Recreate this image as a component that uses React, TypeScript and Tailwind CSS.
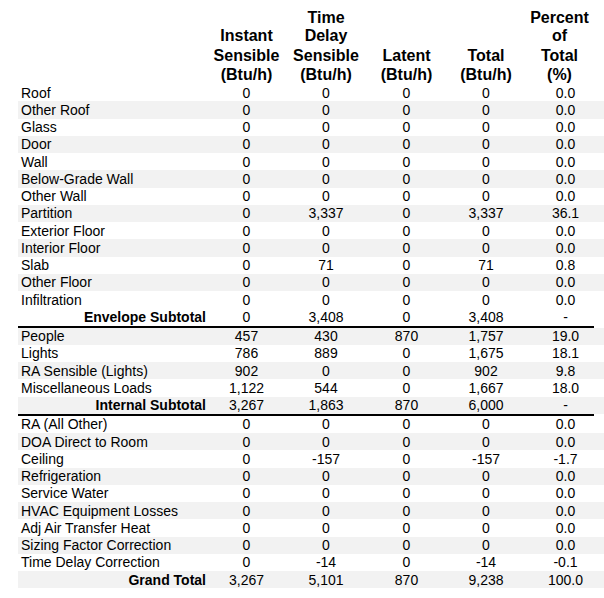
type Row = {
  label: string;
  values: string[];
  shaded?: boolean;
  subtotal?: boolean;
  ruleAfter?: boolean;
};

const zeros = ['0', '0', '0', '0', '0.0'];

const rows: Row[] = [
  { label: 'Roof', values: zeros },
  { label: 'Other Roof', values: zeros, shaded: true },
  { label: 'Glass', values: zeros },
  { label: 'Door', values: zeros, shaded: true },
  { label: 'Wall', values: zeros },
  { label: 'Below-Grade Wall', values: zeros, shaded: true },
  { label: 'Other Wall', values: zeros },
  { label: 'Partition', values: ['0', '3,337', '0', '3,337', '36.1'], shaded: true },
  { label: 'Exterior Floor', values: zeros },
  { label: 'Interior Floor', values: zeros, shaded: true },
  { label: 'Slab', values: ['0', '71', '0', '71', '0.8'] },
  { label: 'Other Floor', values: zeros, shaded: true },
  { label: 'Infiltration', values: zeros },
  { label: 'Envelope Subtotal', values: ['0', '3,408', '0', '3,408', '-'], subtotal: true, ruleAfter: true },
  { label: 'People', values: ['457', '430', '870', '1,757', '19.0'], shaded: true },
  { label: 'Lights', values: ['786', '889', '0', '1,675', '18.1'] },
  { label: 'RA Sensible (Lights)', values: ['902', '0', '0', '902', '9.8'], shaded: true },
  { label: 'Miscellaneous Loads', values: ['1,122', '544', '0', '1,667', '18.0'] },
  { label: 'Internal Subtotal', values: ['3,267', '1,863', '870', '6,000', '-'], subtotal: true, shaded: true, ruleAfter: true },
  { label: 'RA (All Other)', values: zeros },
  { label: 'DOA Direct to Room', values: zeros, shaded: true },
  { label: 'Ceiling', values: ['0', '-157', '0', '-157', '-1.7'] },
  { label: 'Refrigeration', values: zeros, shaded: true },
  { label: 'Service Water', values: zeros },
  { label: 'HVAC Equipment Losses', values: zeros, shaded: true },
  { label: 'Adj Air Transfer Heat', values: zeros },
  { label: 'Sizing Factor Correction', values: zeros, shaded: true },
  { label: 'Time Delay Correction', values: ['0', '-14', '0', '-14', '-0.1'] },
  { label: 'Grand Total', values: ['3,267', '5,101', '870', '9,238', '100.0'], subtotal: true, shaded: true },
];

const headers: string[][] = [
  ['Instant', 'Sensible', '(Btu/h)'],
  ['Time', 'Delay', 'Sensible', '(Btu/h)'],
  ['Latent', '(Btu/h)'],
  ['Total', '(Btu/h)'],
  ['Percent', 'of', 'Total', '(%)'],
];

// header line boxes, top to bottom; shorter headers take the last ones
const lineHeights = ['h-[18px]', 'h-[18px]', 'h-[21px]', 'h-[18px]'];

const grid = 'grid grid-cols-[189px_79px_80px_81px_78px_69px]';

const HeaderCell = ({ lines }: { lines: string[] }) => {
  const heights = lineHeights.slice(lineHeights.length - lines.length);
  return (
    <div className="flex flex-col justify-end">
      {lines.map((line, i) => (
        <div key={line + i} className={`${heights[i]} flex items-center justify-center leading-none`}>
          {line}
        </div>
      ))}
    </div>
  );
};

const App = () => {
  return (
    <div className="h-[598px] w-[604px] bg-white pl-[18px] font-['Liberation_Sans',Arial,sans-serif] text-[14px] text-black">
      <div className={`${grid} h-[84px] text-[16px] font-bold`}>
        <div />
        {headers.map((lines, i) => (
          <HeaderCell key={i} lines={lines} />
        ))}
      </div>

      {rows.map((row) => (
        <div key={row.label}>
          <div className={`${grid} h-[17.25px] items-center leading-none ${row.shaded ? 'bg-[#f2f2f2]' : ''}`}>
            {row.subtotal ? (
              <span className="pr-[1px] text-right font-bold">{row.label}</span>
            ) : (
              <span className="pl-[3px]">{row.label}</span>
            )}
            {row.values.map((v, i) => (
              <span key={i} className={i === 4 ? 'pl-[12px] text-center' : 'text-center'}>
                {v}
              </span>
            ))}
          </div>
          {row.ruleAfter && <div className="h-[2px] w-[576px] bg-black" />}
        </div>
      ))}
    </div>
  );
};

export default App;
